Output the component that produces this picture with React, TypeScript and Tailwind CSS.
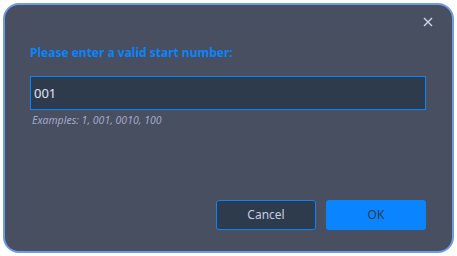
import React, { useState } from "react";

export default function App() {
  const [value, setValue] = useState("001");

  return (
    <div
      className="w-[457px] h-[256px] bg-white p-[3px]"
      style={{ fontFamily: '"Noto Sans", "Open Sans", sans-serif' }}
    >
      <div className="relative h-full w-full rounded-[16px] border-2 border-[#6f9be0] bg-[#474f60] flex flex-col pl-[25px] pr-[26px]">
        {/* Close */}
        <button className="absolute right-[19px] top-[12px] text-[#d4d4ec]">
          <svg width="10" height="10" viewBox="0 0 10 10" fill="none">
            <path d="M1 1L9 9M9 1L1 9" stroke="currentColor" strokeWidth="1.4" />
          </svg>
        </button>

        <h1 className="mt-[40px] text-[12px] font-bold leading-[16px] text-[#0a84ff]">
          Please enter a valid start number:
        </h1>

        <input
          value={value}
          onChange={(e) => setValue(e.target.value)}
          className="mt-[15px] h-[34px] w-full border border-[#0a84ff] bg-[#2e3b4c] px-[3px] text-[13px] text-[#e4e4f2] outline-none"
        />
        <p className="mt-[4px] pl-[2px] text-[10.5px] italic leading-[13px] text-[#a4a8cc]">
          Examples: 1, 001, 0010, 100
        </p>

        <div className="mt-auto mb-[21px] flex justify-end gap-[10px]">
          <button className="h-[30px] w-[100px] rounded-[3px] border border-[#0a84ff] bg-[#2e3b4c] text-[12px] text-[#c8cce4]">
            Cancel
          </button>
          <button className="h-[30px] w-[100px] rounded-[3px] bg-[#0a84ff] text-[12px] text-[#2e3b4c]">
            OK
          </button>
        </div>
      </div>
    </div>
  );
}
